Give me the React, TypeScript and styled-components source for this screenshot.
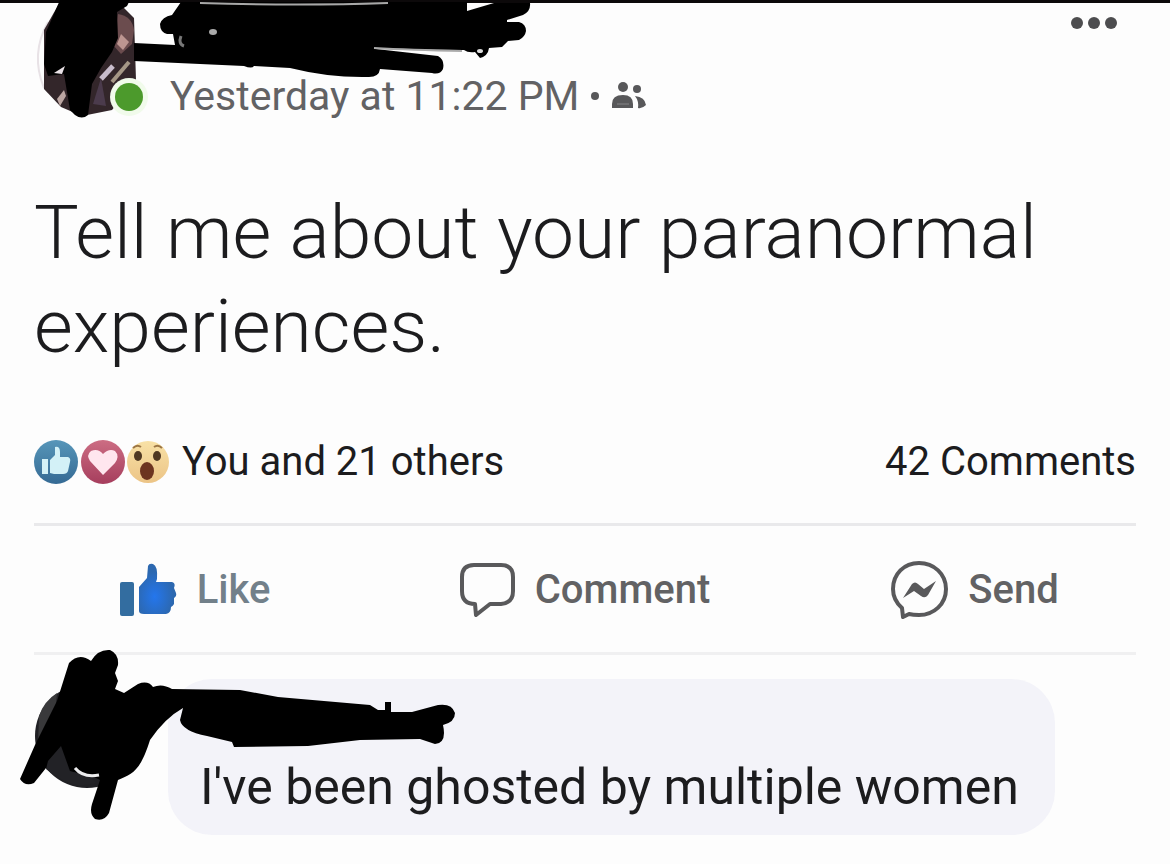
import React from "react";
import styled, { createGlobalStyle } from "styled-components";

const GlobalStyle = createGlobalStyle`
  *, *::before, *::after { box-sizing: border-box; }
  body {
    margin: 0;
    background: #fdfdfd;
    font-family: Roboto, "Liberation Sans", sans-serif;
    color: #1c1c1e;
  }
  h1, p { margin: 0; font-weight: 400; }
`;

const Post = styled.article`
  position: relative;
  border-top: 3px solid #0c090a;
  padding-bottom: 28px;
`;

const Header = styled.header`
  position: relative;
  display: flex;
  justify-content: space-between;
  align-items: flex-start;
  padding: 0 48px 0 170px;
`;

const Meta = styled.div`
  display: flex;
  align-items: center;
  gap: 12px;
  padding-top: 70px;
  color: #626264;
  font-size: 41px;
  line-height: 46px;
`;

const Separator = styled.span`
  width: 8px;
  height: 8px;
  border-radius: 50%;
  background: #58585a;
`;

const MenuButton = styled.button`
  display: flex;
  padding: 12px 0;
  border: 0;
  background: none;
  color: #4d4d4f;
`;

const HeaderArt = styled.svg`
  position: absolute;
  left: 0;
  top: -3px;
  pointer-events: none;
`;

const Message = styled.h1`
  padding: 66px 34px 0;
  font-size: 75px;
  line-height: 94px;
  && { font-weight: 300; }
`;

const Summary = styled.div`
  display: flex;
  align-items: center;
  justify-content: space-between;
  margin: 0 34px;
  padding: 63px 0 35px;
  border-bottom: 3px solid #e9e9eb;
  font-size: 40px;
  line-height: 50px;
`;

const Reactions = styled.div`
  display: flex;
  align-items: center;
  gap: 12px;
`;

const Actions = styled.div`
  display: grid;
  grid-template-columns: repeat(3, 1fr);
`;

const ActionButton = styled.button<{ $active?: boolean }>`
  display: flex;
  align-items: center;
  justify-content: center;
  gap: 20px;
  padding: 35px 0 33px;
  border: 0;
  background: none;
  font-family: inherit;
  font-size: 40px;
  font-weight: 500;
  line-height: 58px;
  color: ${(p) => (p.$active ? "#72808a" : "#626264")};
`;

const Comments = styled.section`
  position: relative;
  margin: 0 34px;
  padding: 24px 0 0 134px;
  border-top: 3px solid #f0f0f1;
`;

const Bubble = styled.div`
  width: fit-content;
  padding: 80px 36px 20px 32px;
  border-radius: 44px;
  background: #f3f3f9;
  font-size: 50px;
  line-height: 56px;
`;

const CommentArt = styled.svg`
  position: absolute;
  left: -34px;
  top: -16px;
  pointer-events: none;
`;

function FriendsIcon() {
  return (
    <svg width="36" height="30" viewBox="0 0 36 30" fill="#58585a" role="img" aria-label="Friends">
      <circle cx="12" cy="6" r="5" />
      <circle cx="26" cy="8" r="4" />
      <path d="M1 27V23Q1 14 12 14Q22 14 22 23V27Z" />
      <path d="M24 15Q34 16 35 24Q31 28 27 27Q28 20 24 15Z" />
      <path d="M6 23H18" stroke="#858587" strokeWidth="1" />
    </svg>
  );
}

function ReactionIcons() {
  return (
    <svg width="136" height="52" viewBox="0 0 136 52" role="img" aria-label="Like, love and wow">
      <defs>
        <linearGradient id="blue" x2="0" y2="1">
          <stop stopColor="#5796b9" />
          <stop offset="1" stopColor="#356a94" />
        </linearGradient>
        <linearGradient id="pink" x2="0" y2="1">
          <stop stopColor="#cc6d83" />
          <stop offset="1" stopColor="#a63e5d" />
        </linearGradient>
        <linearGradient id="yellow" x2="0" y2="1">
          <stop stopColor="#f8e1a6" />
          <stop offset="1" stopColor="#ecc486" />
        </linearGradient>
      </defs>
      <circle cx="114" cy="26" r="21" fill="url(#yellow)" />
      <circle cx="69" cy="26" r="22" fill="url(#pink)" />
      <circle cx="22" cy="26" r="22" fill="url(#blue)" />
      <path d="M8 23H14V38H8Z M16 37V24L21 19V11Q26 10 26 16V21H34Q37 22 36 26L34 35Q33 38 29 38H20Z" fill="#d3f1f7" />
      <path d="M69 39L56 25Q52 19 57 15Q64 12 69 18Q75 12 81 15Q86 20 81 27Z" fill="#ffe6ee" />
      <ellipse cx="104" cy="20" rx="4" ry="5" fill="#4f3822" />
      <ellipse cx="123" cy="20" rx="4" ry="5" fill="#4f3822" />
      <ellipse cx="113" cy="35" rx="7" ry="9" fill="#6d3420" />
      <path d="M99 12Q103 8 107 11M120 11Q124 8 128 12" fill="none" stroke="#9c7645" strokeWidth="2" />
    </svg>
  );
}

function LikeIcon() {
  return (
    <svg width="57" height="56" viewBox="0 0 57 56" aria-hidden="true">
      <defs>
        <radialGradient id="thumb" cx=".42" cy=".65" r=".5">
          <stop stopColor="#2476ed" />
          <stop offset="1" stopColor="#2c68b0" />
        </radialGradient>
      </defs>
      <rect x="0" y="20" width="14" height="34" rx="2" fill="#336da0" />
      <path
        d="M19 49V25L27 16L28 4Q29 1 33 2Q38 4 37 17L36 20H52Q56 21 54 26L56 31Q57 34 54 36L54 42Q53 44 51 45Q51 51 46 52H24Q19 52 19 49Z"
        fill="url(#thumb)"
      />
    </svg>
  );
}

function CommentIcon() {
  return (
    <svg width="55" height="56" viewBox="0 0 55 56" fill="none" stroke="#59595b" strokeWidth="4" strokeLinejoin="round" aria-hidden="true">
      <path d="M14 3H41Q53 3 53 15V29Q53 41 41 42H30L16 53L15 42Q2 42 2 29V15Q2 3 14 3Z" />
    </svg>
  );
}

function SendIcon() {
  return (
    <svg width="57" height="58" viewBox="0 0 57 58" aria-hidden="true">
      <path
        d="M28 2C43 2 55 13 55 28S43 54 28 54Q22 54 18 53L12 56L11 47Q2 39 2 28C2 13 13 2 28 2Z"
        fill="none"
        stroke="#59595b"
        strokeWidth="4"
        strokeLinejoin="round"
      />
      <path d="M12 37L21 23Q24 20 27 23L33 28L45 20L37 34Q34 38 30 35L23 30Z" fill="#59595b" />
    </svg>
  );
}

function HeaderScribble() {
  return (
    <HeaderArt width="560" height="130" viewBox="0 0 560 130" aria-hidden="true">
      <path d="M48 22Q30 54 44 88" fill="none" stroke="#e8e2e6" strokeWidth="2" />
      <path d="M44 30L60 2H118L134 18L136 80L112 110L82 116L61 107L44 89Z" fill="#33262a" />
      <path d="M118 14Q132 16 134 30L132 44L121 54L113 45Z" fill="#6b4c4e" />
      <path d="M121 34L129 42L123 50L117 44Z" fill="#bd9691" />
      <path d="M112 82L129 62" stroke="#a59786" strokeWidth="4" />
      <path d="M101 79L113 66" stroke="#c9bdcc" strokeWidth="5" />
      <path d="M57 99L64 90L66 96L60 106Z" fill="#bca6a2" />
      <path d="M101 78L106 106L93 104Z" fill="#4b3b4c" />
      <path
        d="M60 0H130L127 6L117 12L118 38L112 52L101 68L92 84L88 115Q82 120 75 115L70 110L64 74L48 76L44 64L46 32Z"
        fill="#000"
      />
      <path d="M54 73L65 66L62 74Z" fill="#e9e1e6" />
      <path
        d="M181 2H467V11L494 3H530Q531 11 523 15L507 20V22H519Q526 24 526 31Q525 37 519 40L508 41L502 47L489 48Q488 56 480 58L475 52Q468 53 464 50L376 49L438 56Q445 60 443 69Q440 75 432 73L380 69Q379 77 369 77Q330 78 290 68L254 66Q252 69 244 66L134 61V43L175 45L173 34H167Q160 32 160 24Q162 17 172 15Z"
        fill="#000"
      />
      <path d="M200 3Q300 6 388 3" fill="none" stroke="#a8a8a8" strokeWidth="2" />
      <path d="M374 48Q410 50 462 51" fill="none" stroke="#aaa" strokeWidth="2" />
      <path d="M181 36Q178 44 184 46" fill="none" stroke="#777" strokeWidth="3" />
      <ellipse cx="213" cy="32" rx="4" ry="3" fill="#aaa" />
      <ellipse cx="480" cy="51" rx="3" ry="2" fill="#ddd" />
      <circle cx="129" cy="97" r="19" fill="#f1fbeb" />
      <circle cx="129" cy="97" r="14" fill="#4c9a2c" />
    </HeaderArt>
  );
}

function CommentScribble() {
  return (
    <CommentArt width="470" height="190" viewBox="0 640 470 190" aria-hidden="true">
      <circle cx="87" cy="737" r="52" fill="#202024" />
      <path d="M39 717Q44 702 57 694L52 745L38 747Z" fill="#39393b" />
      <path d="M107 695L122 693L118 703L107 711Z" fill="#555557" />
      <path
        d="M69 664Q79 653 91 662Q98 650 110 651Q119 655 118 666L115 674L118 682L115 690L124 694L138 685Q148 681 153 688Q162 684 172 690L240 691L278 698L370 706L378 711H385V703H391V713H412L438 706Q452 704 455 714Q455 723 443 726Q447 744 435 745L420 740L360 741L308 747L234 748L232 743L207 737Q182 732 180 721L183 709Q165 719 150 741C140 773 132 775 118 781L109 814Q104 823 95 820Q89 815 92 805L100 781Q96 779 91 776L46 769L34 784Q25 788 20 780L35 746L57 702Z"
        fill="#000"
      />
      <path d="M48 762L61 747L70 772L91 778L96 784L79 787Q58 781 46 770Z" fill="#222226" />
      <path d="M75 769Q83 779 99 776" fill="none" stroke="#ececee" strokeWidth="3" />
    </CommentArt>
  );
}

export default function App() {
  return (
    <>
      <GlobalStyle />
      <Post>
        <Header>
          <Meta>
            <time>Yesterday at 11:22 PM</time>
            <Separator />
            <FriendsIcon />
          </Meta>
          <MenuButton aria-label="More options">
            <svg width="52" height="16" viewBox="0 0 52 16" fill="currentColor" aria-hidden="true">
              <circle cx="7" cy="8" r="6" />
              <circle cx="24" cy="8" r="6" />
              <circle cx="41" cy="8" r="6" />
            </svg>
          </MenuButton>
          <HeaderScribble />
        </Header>
        <Message>Tell me about your paranormal experiences.</Message>
        <Summary>
          <Reactions>
            <ReactionIcons />
            <span>You and 21 others</span>
          </Reactions>
          <span>42 Comments</span>
        </Summary>
        <Actions>
          <ActionButton $active>
            <LikeIcon />
            Like
          </ActionButton>
          <ActionButton>
            <CommentIcon />
            Comment
          </ActionButton>
          <ActionButton>
            <SendIcon />
            Send
          </ActionButton>
        </Actions>
        <Comments>
          <Bubble>
            <p>I've been ghosted by multiple women</p>
          </Bubble>
          <CommentScribble />
        </Comments>
      </Post>
    </>
  );
}
